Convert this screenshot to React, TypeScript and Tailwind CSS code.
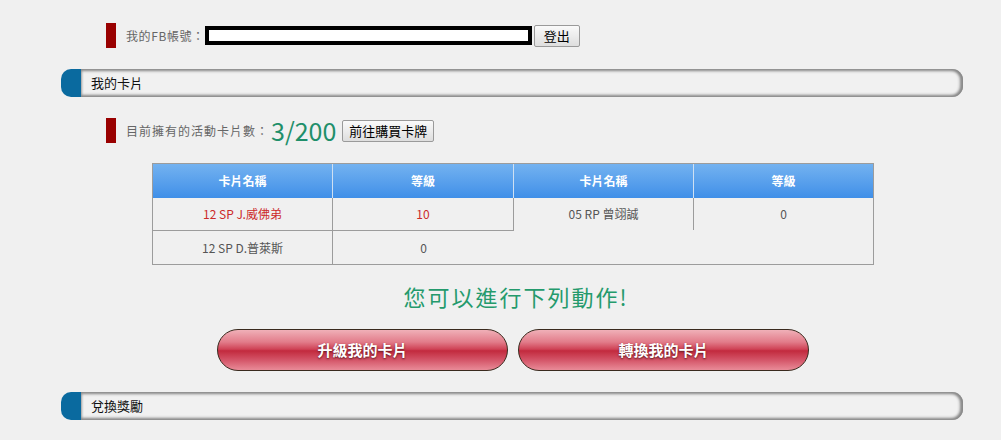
import React from "react";

const font = { fontFamily: '"Noto Sans CJK TC", "Noto Sans", sans-serif' };

function SectionBar({ title }: { title: string }) {
  return (
    <div className="flex h-[28px] w-[902px]">
      <div className="w-[20px] rounded-l-[10px] bg-[#0a6a9f]" />
      <div className="flex flex-1 items-center rounded-r-[11px] bg-[#f1f1f1] pl-[10px] text-[13px] text-[#111] shadow-[inset_0_2px_3px_#8a8a8a,inset_0_-2px_3px_#8a8a8a,inset_-3px_0_3px_#8a8a8a]">
        {title}
      </div>
    </div>
  );
}

function RedMark() {
  return <div className="h-[25px] w-[10px] bg-[#990000]" />;
}

const cards = [
  { name: "12 SP J.威佛弟", lv: "10", red: true },
  { name: "05 RP 曾翊誠", lv: "0", red: false },
  { name: "12 SP D.普萊斯", lv: "0", red: false },
];

export default function App() {
  return (
    <div className="h-[440px] w-[1001px] overflow-hidden bg-[#f0f0f0]" style={font}>
      <div className="pl-[61px] pt-[23px]">
        {/* account row */}
        <div className="flex items-center pl-[45px]">
          <RedMark />
          <span className="ml-[10px] text-[12px] tracking-[0.6px] text-[#666]">我的FB帳號：</span>
          <div className="h-[19px] w-[327px] border-[4px] border-black bg-white" />
          <button className="ml-[2px] h-[22px] rounded-[2px] border border-[#9a9a9a] bg-gradient-to-b from-[#fafafa] to-[#dedede] px-[9px] text-[13px] leading-none text-black">
            登出
          </button>
        </div>

        <div className="mt-[21px]">
          <SectionBar title="我的卡片" />
        </div>

        {/* count row */}
        <div className="mt-[21px] flex items-center pl-[45px]">
          <RedMark />
          <span className="ml-[10px] text-[12px] tracking-[1px] text-[#666]">目前擁有的活動卡片數：</span>
          <span className="ml-[2px] text-[25px] leading-none text-[#1f8f6a]">3/200</span>
          <button className="ml-[6px] h-[22px] rounded-[2px] border border-[#9a9a9a] bg-gradient-to-b from-[#fafafa] to-[#dedede] px-[6px] text-[13px] leading-none text-black">
            前往購買卡牌
          </button>
        </div>

        {/* card table */}
        <div className="ml-[91px] mt-[20px] w-[722px] border border-[#9c9c9c] text-[12px]">
          <div className="grid grid-cols-[180px_181px_180px_179px] bg-gradient-to-b from-[#73b2f0] to-[#3f8fe8] font-bold text-white">
            {["卡片名稱", "等級", "卡片名稱", "等級"].map((h, i) => (
              <div
                key={i}
                className={`flex h-[34px] items-center justify-center ${i < 3 ? "border-r border-[#cfe0f2]" : ""}`}
              >
                {h}
              </div>
            ))}
          </div>
          <div className="grid grid-cols-[180px_181px_180px_179px]">
            <div className="flex h-[33px] items-center justify-center border-b border-r border-[#9c9c9c] text-[#cc2a2a]">
              {cards[0].name}
            </div>
            <div className="flex h-[33px] items-center justify-center border-b border-r border-[#9c9c9c] text-[#cc2a2a]">
              {cards[0].lv}
            </div>
            <div className="flex h-[32px] items-center justify-center border-r border-[#9c9c9c] text-[#555]">
              {cards[1].name}
            </div>
            <div className="flex h-[32px] items-center justify-center text-[#555]">{cards[1].lv}</div>
            <div className="flex h-[33px] items-center justify-center border-r border-[#9c9c9c] text-[#555]">
              {cards[2].name}
            </div>
            <div className="flex h-[33px] items-center justify-center text-[#555]">{cards[2].lv}</div>
          </div>
        </div>

        <div className="mt-[16px] w-[902px] pl-[8px] text-center text-[22px] leading-[30px] tracking-[2px] text-[#249a6c]">
          您可以進行下列動作!
        </div>

        <div className="mt-[18px] flex gap-[10px] pl-[156px]">
          {["升級我的卡片", "轉換我的卡片"].map((t) => (
            <button
              key={t}
              className="flex h-[42px] w-[291px] items-center justify-center rounded-full border border-[#3a2a1e] bg-[linear-gradient(to_bottom,#f0b0b8_0%,#e27c8a_30%,#cf4356_48%,#c22a3e_52%,#d45568_75%,#e98b98_100%)] text-[15px] font-bold text-white [text-shadow:0_1px_2px_#5a1a20]"
            >
              {t}
            </button>
          ))}
        </div>

        <div className="mt-[21px]">
          <SectionBar title="兌換獎勵" />
        </div>
      </div>
    </div>
  );
}
